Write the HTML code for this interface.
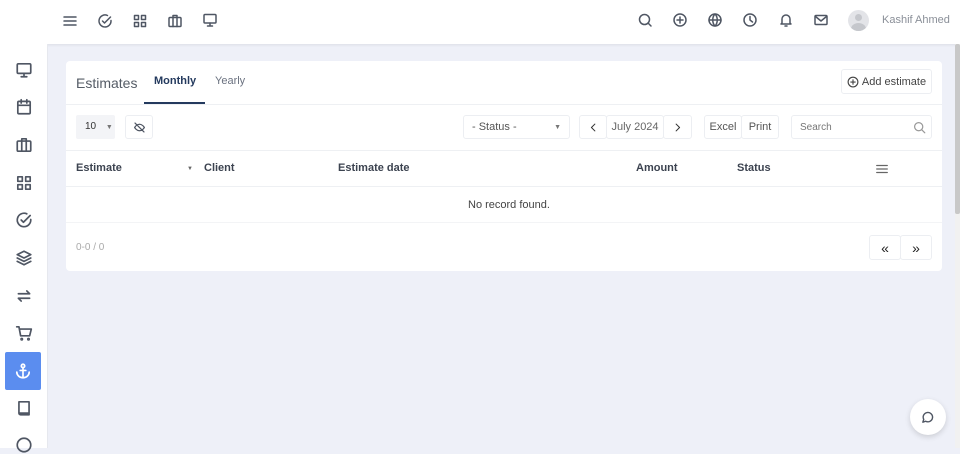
<!DOCTYPE html>
<html><head><meta charset="utf-8"><style>
*{box-sizing:border-box;margin:0;padding:0}
body{width:960px;height:448px;overflow:hidden;background:#eef0f8;font-family:"Liberation Sans",sans-serif;color:#4a5260;position:relative}
.top{position:absolute;left:0;top:0;width:960px;height:44px;background:#fff;box-shadow:0 1px 3px rgba(0,0,0,.08)}
.side{position:absolute;left:0;top:44px;width:48px;height:404px;background:#fff;border-right:1px solid #e6e8ee}
svg{fill:none;stroke:#4f5663;stroke-width:1.5;stroke-linecap:round;stroke-linejoin:round}
.ic{position:absolute;width:16px;height:16px}
.card{position:absolute;left:66px;top:61px;width:876px;height:210px;background:#fff;border-radius:4px}
.abs{position:absolute}
.btn{position:absolute;border:1px solid #eceef2;border-radius:3px;font-size:11px;color:#555;display:flex;align-items:center;justify-content:center;background:#fff}
.th{position:absolute;top:162px;font-size:11px;font-weight:bold;color:#3c4350}
</style></head><body>
<div class="top">
<svg class="ic" style="left:62px;top:13px" viewBox="0 0 16 16"><path d="M2 4h12M2 8h12M2 12h12"/></svg>
<svg class="ic" style="left:97px;top:13px" viewBox="0 0 16 16"><path d="M14 7.5A6 6 0 1 1 10.5 2.5"/><path d="M5.5 8l2 2 6-6"/></svg>
<svg class="ic" style="left:132px;top:13px" viewBox="0 0 16 16"><rect x="2.5" y="2.5" width="4" height="4"/><rect x="9.5" y="2.5" width="4" height="4"/><rect x="2.5" y="9.5" width="4" height="4"/><rect x="9.5" y="9.5" width="4" height="4"/></svg>
<svg class="ic" style="left:167px;top:13px" viewBox="0 0 16 16"><rect x="2" y="4.5" width="12" height="9" rx="1"/><path d="M6 4.5V2.5h4v2M6 4.5v9M10 4.5v9"/></svg>
<svg class="ic" style="left:202px;top:12px" viewBox="0 0 16 16"><rect x="2" y="2.5" width="12" height="8.5" rx="1"/><path d="M8 11v3M5.5 14h5"/></svg>
<svg class="ic" style="left:637px;top:12px" viewBox="0 0 16 16"><circle cx="7.5" cy="7.5" r="5"/><path d="M11 11l3 3"/></svg>
<svg class="ic" style="left:672px;top:12px" viewBox="0 0 16 16"><circle cx="8" cy="8" r="6"/><path d="M8 5v6M5 8h6"/></svg>
<svg class="ic" style="left:707px;top:12px" viewBox="0 0 16 16"><circle cx="8" cy="8" r="6"/><path d="M2 8h12M8 2c-3 3-3 9 0 12M8 2c3 3 3 9 0 12"/></svg>
<svg class="ic" style="left:742px;top:12px" viewBox="0 0 16 16"><circle cx="8" cy="8" r="6"/><path d="M8 4.5V8l2.5 2"/></svg>
<svg class="ic" style="left:778px;top:12px" viewBox="0 0 16 16"><path d="M4 11V7a4 4 0 0 1 8 0v4l1 1H3zM7 14h2"/></svg>
<svg class="ic" style="left:813px;top:12px" viewBox="0 0 16 16"><rect x="2" y="3.5" width="12" height="9" rx="1"/><path d="M2.5 4.5L8 9l5.5-4.5"/></svg>
<div class="abs" style="left:848px;top:10px;width:21px;height:21px;border-radius:50%;background:#e3e4e8;overflow:hidden"><div class="abs" style="left:7px;top:4px;width:7px;height:7px;border-radius:50%;background:#c5c7cc"></div><div class="abs" style="left:3px;top:13px;width:15px;height:12px;border-radius:50%;background:#c5c7cc"></div></div>
<div class="abs" style="left:882px;top:14px;font-size:11px;color:#8a8f98">Kashif Ahmed</div>
</div>
<div class="side">
<svg class="ic" style="left:15px;top:17px;width:18px;height:18px" viewBox="0 0 16 16"><rect x="2" y="2.5" width="12" height="8.5" rx="1"/><path d="M8 11v3M5.5 14h5"/></svg>
<svg class="ic" style="left:15px;top:54px;width:18px;height:18px" viewBox="0 0 16 16"><rect x="2.5" y="3" width="11" height="11" rx="1"/><path d="M2.5 6.5h11M5.5 1.5v3M10.5 1.5v3"/></svg>
<svg class="ic" style="left:15px;top:92px;width:18px;height:18px" viewBox="0 0 16 16"><rect x="2" y="4.5" width="12" height="9" rx="1"/><path d="M6 4.5V2.5h4v2M6 4.5v9M10 4.5v9"/></svg>
<svg class="ic" style="left:15px;top:130px;width:18px;height:18px" viewBox="0 0 16 16"><rect x="2.5" y="2.5" width="4" height="4"/><rect x="9.5" y="2.5" width="4" height="4"/><rect x="2.5" y="9.5" width="4" height="4"/><rect x="9.5" y="9.5" width="4" height="4"/></svg>
<svg class="ic" style="left:15px;top:167px;width:18px;height:18px" viewBox="0 0 16 16"><path d="M14 7.5A6 6 0 1 1 10.5 2.5"/><path d="M5.5 8l2 2 6-6"/></svg>
<svg class="ic" style="left:15px;top:205px;width:18px;height:18px" viewBox="0 0 16 16"><path d="M8 2l6 3-6 3-6-3zM2 8l6 3 6-3M2 11l6 3 6-3"/></svg>
<svg class="ic" style="left:15px;top:243px;width:18px;height:18px" viewBox="0 0 16 16"><path d="M3 6h10l-2.5-2.5M13 10H3l2.5 2.5"/></svg>
<svg class="ic" style="left:15px;top:280px;width:18px;height:18px" viewBox="0 0 16 16"><path d="M1.5 2.5h2l1.5 8h8l1.5-6H4.5"/><circle cx="6" cy="13.5" r=".6"/><circle cx="12" cy="13.5" r=".6"/></svg>
<div class="abs" style="left:5px;top:308px;width:36px;height:38px;background:#5b8def;border-radius:2px"></div>
<svg class="ic" style="left:14px;top:318px;width:18px;height:18px;stroke:#fff" viewBox="0 0 16 16"><circle cx="8" cy="3.5" r="1.5"/><path d="M8 5v9M2.5 9a5.5 5 0 0 0 11 0M5.5 7.5h5"/></svg>
<svg class="ic" style="left:15px;top:355px;width:18px;height:18px" viewBox="0 0 16 16"><path d="M3.5 12.5V2.5h9v10zM3.5 12.5a1.5 1.5 0 0 0 1.5 1.5h7.5v-1.5"/></svg>
<svg class="ic" style="left:15px;top:392px;width:18px;height:18px" viewBox="0 0 16 16"><circle cx="8" cy="8" r="6"/></svg>
</div>
<div class="abs" style="left:955px;top:44px;width:5px;height:404px;background:#f1f1f1"></div>
<div class="abs" style="left:955px;top:44px;width:5px;height:170px;background:#c8c8c8;border-radius:2px"></div>

<div class="card">
<div class="abs" style="left:10px;top:14px;font-size:14px;color:#555c66">Estimates</div>
<div class="abs" style="left:88px;top:14px;font-size:11px;font-weight:bold;color:#243a5e">Monthly</div>
<div class="abs" style="left:78px;top:41px;width:61px;height:2px;background:#243a5e"></div>
<div class="abs" style="left:149px;top:14px;font-size:11px;color:#6b7280">Yearly</div>
<div class="btn" style="left:775px;top:8px;width:91px;height:25px;font-size:11px;color:#444">
<svg style="width:12px;height:12px;margin-right:3px;stroke:#444" viewBox="0 0 16 16"><circle cx="8" cy="8" r="6.5"/><path d="M8 5v6M5 8h6"/></svg>Add estimate</div>
<div class="abs" style="left:0;top:43px;width:876px;height:1px;background:#eef0f3"></div>

<div class="abs" style="left:10px;top:54px;width:39px;height:24px;background:#f3f4f7;border-radius:2px;font-size:10px;color:#333;padding:6px 0 0 9px">10 <span style="font-size:7px;color:#777;margin-left:7px">▼</span></div>
<div class="btn" style="left:59px;top:54px;width:28px;height:24px"><svg style="width:13px;height:13px" viewBox="0 0 16 16"><path d="M2 8s2.5-4 6-4 6 4 6 4-2.5 4-6 4-6-4-6-4zM2.5 2.5l11 11"/></svg></div>
<div class="btn" style="left:397px;top:54px;width:107px;height:24px;justify-content:flex-start;padding-left:8px;color:#555">- Status -<span style="position:absolute;right:8px;font-size:7px;color:#777">▼</span></div>
<div class="btn" style="left:513px;top:54px;width:28px;height:24px"><svg style="width:11px;height:11px;stroke:#333" viewBox="0 0 16 16"><path d="M10 3L5 8l5 5"/></svg></div>
<div class="btn" style="left:540px;top:54px;width:58px;height:24px;color:#666">July 2024</div>
<div class="btn" style="left:597px;top:54px;width:29px;height:24px"><svg style="width:11px;height:11px;stroke:#333" viewBox="0 0 16 16"><path d="M6 3l5 5-5 5"/></svg></div>
<div class="btn" style="left:638px;top:54px;width:38px;height:24px">Excel</div>
<div class="btn" style="left:675px;top:54px;width:38px;height:24px">Print</div>
<div class="btn" style="left:725px;top:54px;width:141px;height:24px;justify-content:flex-start;padding-left:8px;color:#777;font-size:10px">Search<svg style="position:absolute;right:5px;width:13px;height:13px;stroke:#999" viewBox="0 0 16 16"><circle cx="7" cy="7" r="5"/><path d="M11 11l3.5 3.5"/></svg></div>
<div class="abs" style="left:0;top:89px;width:876px;height:1px;background:#eef0f3"></div>
</div>
<div class="th" style="left:76px">Estimate</div>
<div class="abs" style="left:187px;top:166px;font-size:6px;color:#666">▼</div>
<div class="th" style="left:204px">Client</div>
<div class="th" style="left:338px">Estimate date</div>
<div class="th" style="left:636px">Amount</div>
<div class="th" style="left:737px">Status</div>
<svg class="ic" style="left:875px;top:162px;width:14px;height:14px;stroke:#666" viewBox="0 0 16 16"><path d="M2 4h12M2 8h12M2 12h12"/></svg>
<div class="abs" style="left:66px;top:186px;width:876px;height:1px;background:#eef0f3"></div>
<div class="abs" style="left:468px;top:199px;font-size:11px;color:#444">No record found.</div>
<div class="abs" style="left:66px;top:222px;width:876px;height:1px;background:#f3f4f6"></div>
<div class="abs" style="left:76px;top:242px;font-size:10px;color:#aaa">0-0 / 0</div>
<div class="btn" style="left:869px;top:235px;width:32px;height:25px;font-size:14px;color:#222">«</div>
<div class="btn" style="left:900px;top:235px;width:32px;height:25px;font-size:14px;color:#222">»</div>
<div class="abs" style="left:910px;top:399px;width:36px;height:36px;border-radius:50%;background:#fff;box-shadow:0 2px 6px rgba(0,0,0,.15)"></div>
<svg class="ic" style="left:920px;top:410px;width:15px;height:15px" viewBox="0 0 16 16"><path d="M3 13l1-3a5 5 0 1 1 2 2z"/></svg>
</body></html>
